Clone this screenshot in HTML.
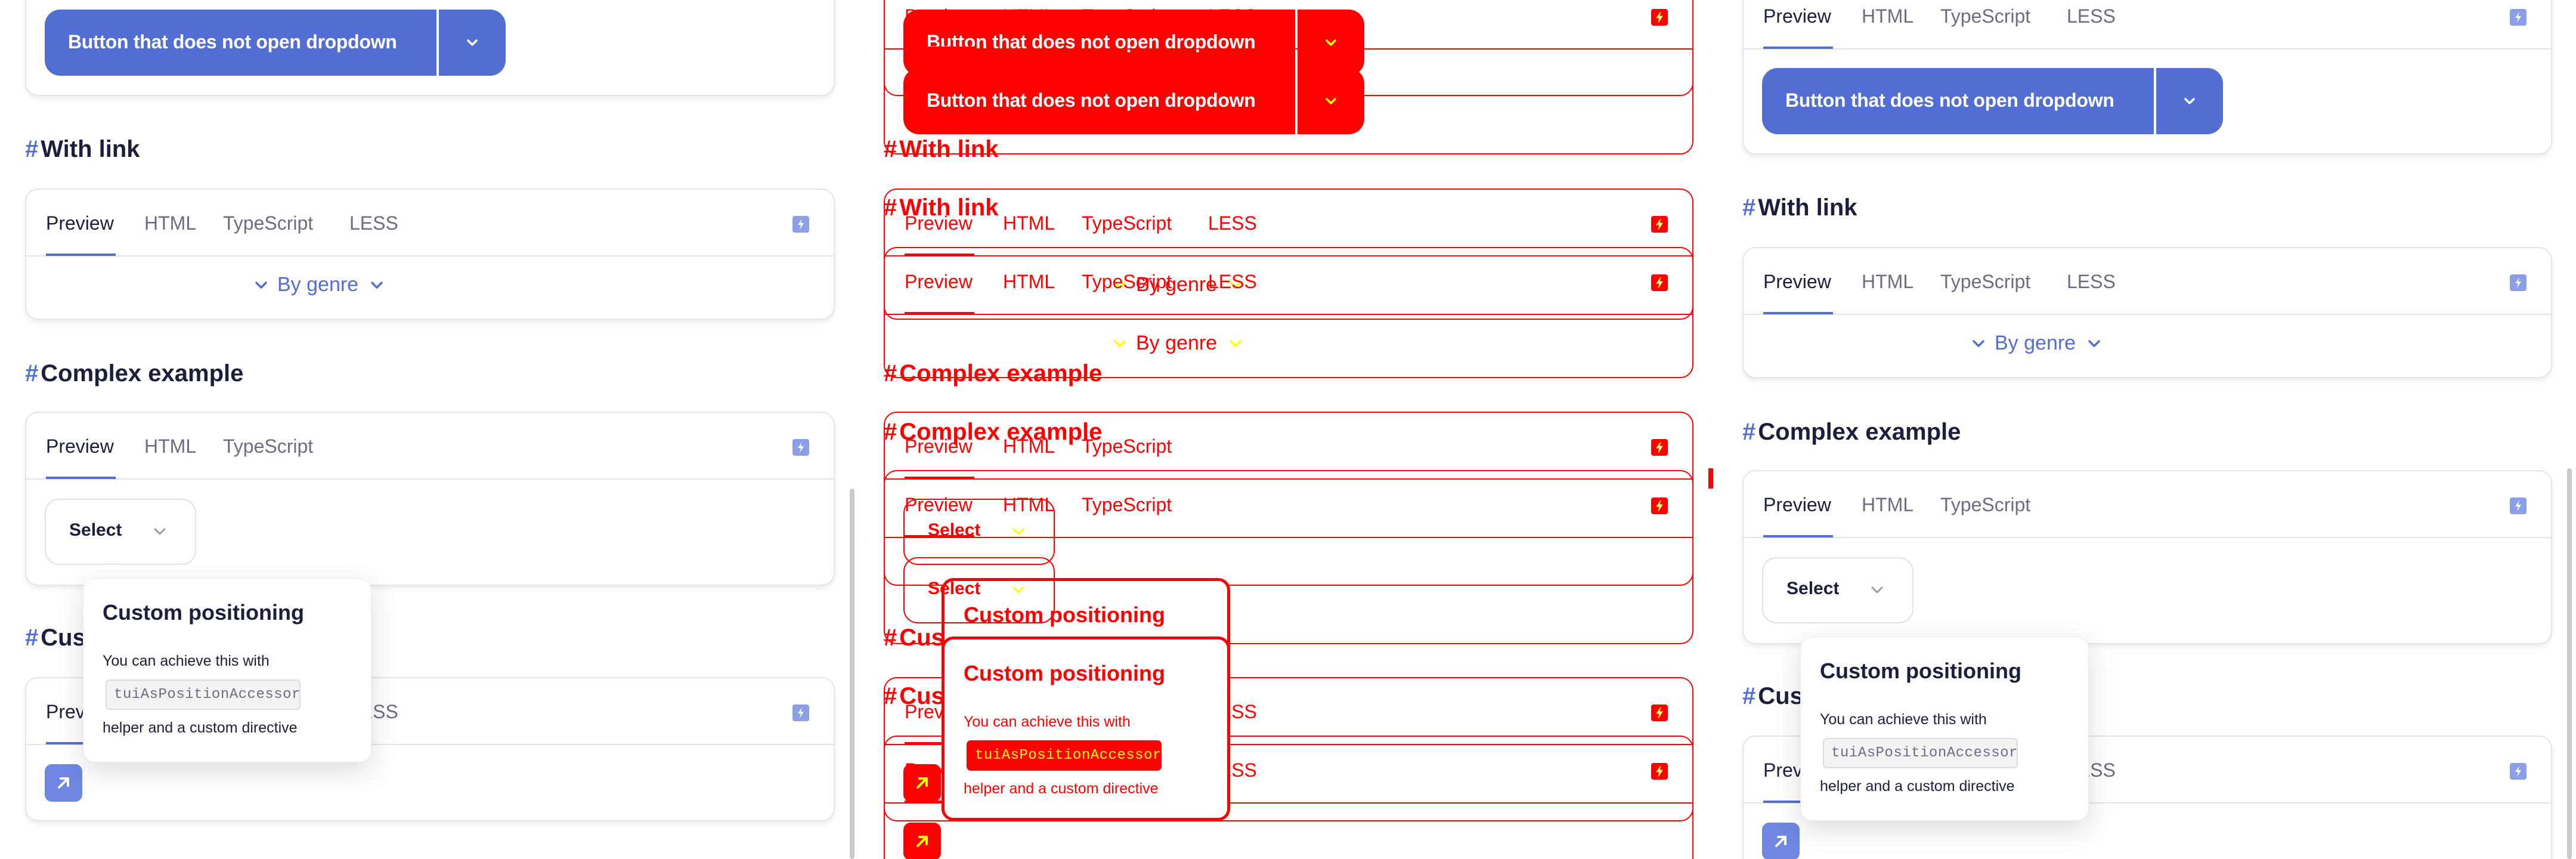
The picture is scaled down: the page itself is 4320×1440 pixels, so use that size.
<!DOCTYPE html>
<html><head><meta charset="utf-8">
<style>
*{box-sizing:border-box;margin:0;padding:0}
html,body{width:4320px;height:1440px;overflow:hidden;background:#fff;font-family:"Liberation Sans",sans-serif}
.panel{position:absolute;top:0;width:1440px;height:1440px;overflow:hidden;background:#fff}
.layer{position:absolute;left:0;top:0;width:1440px;height:1440px;overflow:hidden}
.inner{position:absolute;left:0;width:1440px;height:1440px}
.card{position:absolute;left:42px;width:1358px;border:2px solid #e5e5e8;border-radius:22px;background:#fff;box-shadow:0 5px 8px rgba(0,0,0,.07)}
.tabline{position:absolute;left:0;right:0;top:110px;height:2px;background:#e4e4e6}
.tab{position:absolute;top:34px;font-size:32px;line-height:44px;color:#6b6e80}
.tab.on{color:#1b1f3b}
.ul{position:absolute;left:33px;width:117px;top:107px;height:4px;background:#526ed3}
.bolt{position:absolute;left:1285px;top:44px;width:28px;height:28px;border-radius:4px;background:#8b9fe6}
.bolt svg{position:absolute;left:0;top:0}
.h{position:absolute;left:42px;font-size:40px;font-weight:bold;color:#1b1f3b;line-height:50px;white-space:nowrap}
.h b{color:#526ed3;margin-right:4px}
.btn{position:absolute;left:75px;top:16px;width:773px;height:111px;border-radius:26px;background:#526ed3;overflow:hidden}
.btn .t{position:absolute;left:39px;top:36px;font-size:32px;font-weight:bold;color:#fff;white-space:nowrap;letter-spacing:-0.3px}
.btn .sep{position:absolute;left:657px;top:0;width:4px;height:111px;background:#fff}
.btn svg{position:absolute;left:705px;top:45px}
.link{position:absolute;left:425px;top:458px;font-size:34px;color:#526ed3;white-space:nowrap}
.sel{position:absolute;left:75px;top:836px;width:254px;height:111px;border:2px solid #e2e2e6;border-radius:24px;background:#fff}
.sel .t{position:absolute;left:39px;top:34px;font-size:30px;font-weight:bold;color:#1b1f3b}
.sel svg{position:absolute;left:178px;top:44px}
.pop{position:absolute;left:139px;top:969px;width:484px;height:309px;border-radius:20px;background:#fff;border:1px solid #ececef;box-shadow:0 14px 44px rgba(0,0,0,.14)}
.pop .ti{position:absolute;left:32px;top:36px;font-size:36px;font-weight:bold;color:#1b1f3b;white-space:nowrap}
.pop .p{position:absolute;left:32px;font-size:25px;color:#1b1f3b;white-space:nowrap}
.pop .code{position:absolute;left:37px;top:169px;width:327px;height:51px;border:2px solid #dcdcdf;border-radius:7px;background:#f3f3f4;font-family:"Liberation Mono",monospace;font-size:24px;color:#6b6e80;line-height:47px;padding-left:12px;letter-spacing:0.5px}
.arrow{position:absolute;left:75px;top:1281px;width:63px;height:63px;border-radius:12px;background:#6f87e2}
.arrow svg{position:absolute;left:0;top:0}
.sb{position:absolute;left:1425px;top:819px;width:8px;height:621px;border-radius:4px;background:#c9c9cc}
.diff .card{border-color:#f00;box-shadow:none;background:transparent}
.diff .tabline,.diff .ul{background:#f00}
.diff .tab,.diff .tab.on,.diff .h,.diff .h b,.diff .link,.diff .sel .t,.diff .pop .ti,.diff .pop .p{color:#f00}
.diff .bolt,.diff .btn,.diff .arrow,.diff .pop .code{background:#f00}
.diff .pop .code{color:#ff0;border-color:#f00}
.diff .sel{border-color:#f00;background:transparent}
.diff .pop{border:5px solid #f00;box-shadow:none;background:#fff}
.diff .sb{background:#f00}
.diff svg path{stroke:#ff0}
</style></head><body>
<template id="tpl">
<div class="card" style="top:-129px;height:290px">
 <div class="tab on" style="left:33px">Preview</div><div class="tab" style="left:198px">HTML</div><div class="tab" style="left:330px">TypeScript</div><div class="tab" style="left:542px">LESS</div>
 <div class="tabline"></div><div class="ul"></div>
 <div class="bolt"><svg width="28" height="28" viewBox="0 0 28 28"><path d="M16 5 L9 15 H14 L12 23 L19 12 H14 Z" fill="#fff" stroke="none"/></svg></div>
</div>
<div class="btn"><div class="t">Button that does not open dropdown</div><div class="sep"></div><svg width="24" height="22" viewBox="0 0 24 22"><path d="M5 7 L12 14 L19 7" fill="none" stroke="#fff" stroke-width="3.5" stroke-linecap="round" stroke-linejoin="round"/></svg></div>
<div class="h" style="top:225px"><b>#</b>With link</div>
<div class="card" style="top:316px;height:220px">
 <div class="tab on" style="left:33px">Preview</div><div class="tab" style="left:198px">HTML</div><div class="tab" style="left:330px">TypeScript</div><div class="tab" style="left:542px">LESS</div>
 <div class="tabline"></div><div class="ul"></div>
 <div class="bolt"><svg width="28" height="28" viewBox="0 0 28 28"><path d="M16 5 L9 15 H14 L12 23 L19 12 H14 Z" fill="#fff" stroke="none"/></svg></div>
</div>
<div class="link"><svg width="26" height="20" viewBox="0 0 26 20" style="vertical-align:middle;margin-right:14px"><path d="M5 5 L13 13 L21 5" fill="none" stroke="#526ed3" stroke-width="3.5" stroke-linecap="round" stroke-linejoin="round"/></svg>By genre<svg width="26" height="20" viewBox="0 0 26 20" style="vertical-align:middle;margin-left:18px"><path d="M5 5 L13 13 L21 5" fill="none" stroke="#526ed3" stroke-width="3.5" stroke-linecap="round" stroke-linejoin="round"/></svg></div>
<div class="h" style="top:601px"><b>#</b>Complex example</div>
<div class="card" style="top:690px;height:292px">
 <div class="tab on" style="left:33px">Preview</div><div class="tab" style="left:198px">HTML</div><div class="tab" style="left:330px">TypeScript</div>
 <div class="tabline"></div><div class="ul"></div>
 <div class="bolt"><svg width="28" height="28" viewBox="0 0 28 28"><path d="M16 5 L9 15 H14 L12 23 L19 12 H14 Z" fill="#fff" stroke="none"/></svg></div>
</div>
<div class="sel"><div class="t">Select</div><svg width="26" height="20" viewBox="0 0 26 20"><path d="M5 5 L13 13 L21 5" fill="none" stroke="#9a9cab" stroke-width="3" stroke-linecap="round" stroke-linejoin="round"/></svg></div>
<div class="h" style="top:1044px"><b>#</b>Custom host</div>
<div class="card" style="top:1135px;height:242px">
 <div class="tab on" style="left:33px">Preview</div><div class="tab" style="left:198px">HTML</div><div class="tab" style="left:330px">TypeScript</div><div class="tab" style="left:542px">LESS</div>
 <div class="tabline"></div><div class="ul"></div>
 <div class="bolt"><svg width="28" height="28" viewBox="0 0 28 28"><path d="M16 5 L9 15 H14 L12 23 L19 12 H14 Z" fill="#fff" stroke="none"/></svg></div>
</div>
<div class="arrow"><svg width="63" height="63" viewBox="0 0 63 63"><path d="M24 39 L39 24 M27 24 H39 V36" fill="none" stroke="#fff" stroke-width="4" stroke-linecap="round" stroke-linejoin="round"/></svg></div>
<div class="pop">
 <div class="ti">Custom positioning</div>
 <div class="p" style="top:124px">You can achieve this with</div>
 <div class="code">tuiAsPositionAccessor</div>
 <div class="p" style="top:236px">helper and a custom directive</div>
</div>
</template>

<div class="panel" id="p1" style="left:0"></div>
<div class="panel diff" id="p2" style="left:1440px"></div>
<div class="panel" id="p3" style="left:2880px"></div>

<script>
var t=document.getElementById('tpl');
function add(id,off){var l=document.createElement('div');l.className='layer';var i=document.createElement('div');i.className='inner';i.style.top=off+'px';i.appendChild(t.content.cloneNode(true));l.appendChild(i);document.getElementById(id).appendChild(l);}
add('p1',0);add('p2',0);add('p2',98);add('p3',98);
function sb(id,top){var s=document.createElement('div');s.className='sb';s.style.top=top+'px';s.style.height=(1440-top)+'px';document.getElementById(id).appendChild(s);}
sb('p1',819);sb('p3',785);
var d=document.createElement('div');d.style.cssText='position:absolute;left:1425px;top:785px;width:8px;height:34px;background:#f00';document.getElementById('p2').appendChild(d);
</script>
</body></html>
